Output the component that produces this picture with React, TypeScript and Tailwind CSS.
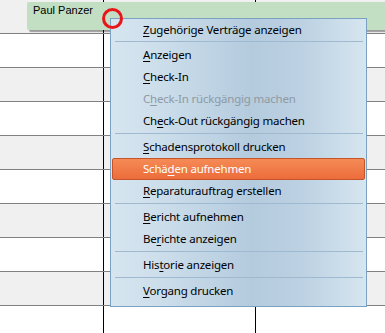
import React from "react";

type Item =
  | { sep: true }
  | { sep?: false; pre: string; key: string; post: string; disabled?: boolean; active?: boolean; first?: boolean };

const items: Item[] = [
  { pre: "", key: "Z", post: "ugehörige Verträge anzeigen", first: true },
  { sep: true },
  { pre: "", key: "A", post: "nzeigen" },
  { pre: "", key: "C", post: "heck-In" },
  { pre: "C", key: "h", post: "eck-In rückgängig machen", disabled: true },
  { pre: "Ch", key: "e", post: "ck-Out rückgängig machen" },
  { sep: true },
  { pre: "", key: "S", post: "chadensprotokoll drucken" },
  { pre: "Schä", key: "d", post: "en aufnehmen", active: true },
  { pre: "", key: "R", post: "eparaturauftrag erstellen" },
  { sep: true },
  { pre: "", key: "B", post: "ericht aufnehmen" },
  { pre: "Be", key: "r", post: "ichte anzeigen" },
  { sep: true },
  { pre: "His", key: "t", post: "orie anzeigen" },
  { sep: true },
  { pre: "", key: "V", post: "organg drucken" },
];

export default function App() {
  const rows = Array.from({ length: 10 });
  return (
    <div className="relative w-[385px] h-[333px] overflow-hidden bg-white font-['Liberation_Sans',sans-serif]">
      {/* grid rows */}
      <div className="flex flex-col">
        {rows.map((_, i) => (
          <div
            key={i}
            className={`flex h-[34px] border-b border-[#808080] ${i % 2 === 0 ? "bg-[#f0f0f0]" : "bg-white"}`}
          >
            <div className="w-[104px] shrink-0 border-r border-black" />
            <div className="w-[152px] shrink-0 border-r border-black" />
            <div className="flex-1" />
          </div>
        ))}
      </div>

      {/* appointment bar */}
      <div className="absolute left-[27px] top-[2px] w-[380px] h-[28px] bg-[#c3dfc3] rounded-[2px] shadow-[2px_2px_1px_rgba(0,0,0,0.35)] pl-[6px] pt-[2px] text-[11px] leading-[13px] text-black">
        Paul Panzer
      </div>

      {/* context menu */}
      <div className="absolute left-[110px] top-[18px] w-[257px] flex flex-col border border-[#7aa1c1] bg-[linear-gradient(to_right,#d6e5f0,#cfe0ec_15%,#b4cbde_55%,#bcd1e2_75%,#d6e6f0)] pb-[4px] font-['Noto_Sans',sans-serif] text-[11.5px] tracking-[-0.2px]">
        {items.map((it, i) =>
          it.sep ? (
            <div key={i} className="h-[4px] pt-px pl-[4px] pr-[3px]">
              <div className="h-px bg-[#9fbad0]" />
            </div>
          ) : (
            <div key={i} className={`${it.first ? "h-[21px]" : "h-[22px]"} px-[1px]`}>
              <div
                className={`h-full flex items-center pl-[30px] rounded-[2px] border ${
                  it.active
                    ? "border-[#c4552a] bg-[linear-gradient(to_bottom,#f58b56,#ec6d3b)] text-white"
                    : "border-transparent " + (it.disabled ? "text-[#8f9aa3]" : "text-black")
                }`}
              >
                <span className="whitespace-pre leading-none">
                  {it.pre}
                  <span className="underline underline-offset-[2px]">{it.key}</span>
                  {it.post}
                </span>
              </div>
            </div>
          )
        )}
      </div>

      {/* red circle marker */}
      <div className="absolute left-[102px] top-[8px] w-[21px] h-[21px] rounded-full border-[3px] border-[#e8161b]" />
    </div>
  );
}
